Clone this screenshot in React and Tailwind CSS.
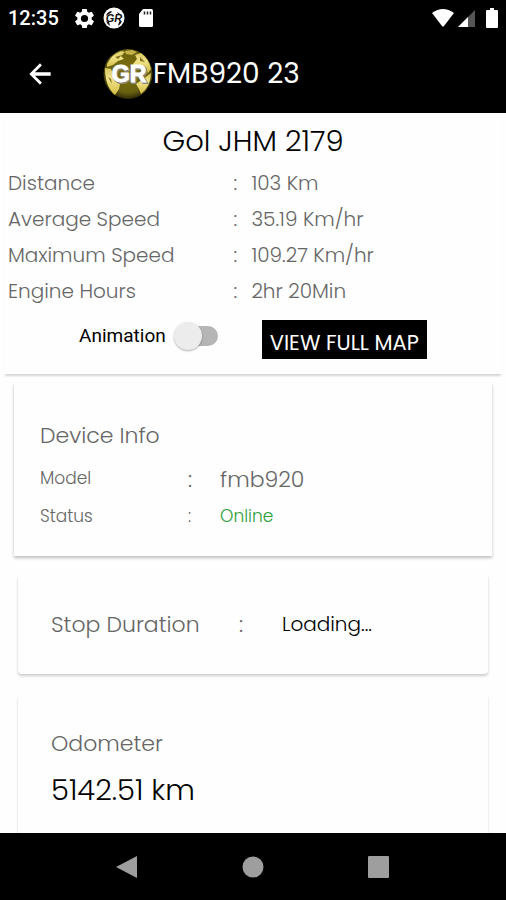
import React, { useState } from 'react';

const stats = [
  { label: 'Distance', value: '103 Km' },
  { label: 'Average Speed', value: '35.19 Km/hr' },
  { label: 'Maximum Speed', value: '109.27 Km/hr' },
  { label: 'Engine Hours', value: '2hr 20Min' },
];

function StatusBar() {
  return (
    <div className="flex h-9 shrink-0 items-center justify-between pl-2 pr-2 text-white">
      <div className="flex items-center">
        <span className="w-[66px] font-[Roboto,sans-serif] text-xl font-medium">12:35</span>
        <svg width="21" height="21" viewBox="1.500 1.500 21 21" fill="currentColor">
          <path d="M19.14 12.94c.04-.3.06-.61.06-.94s-.02-.64-.07-.94l2.03-1.58a.49.49 0 0 0 .12-.61l-1.92-3.32a.49.49 0 0 0-.59-.22l-2.39.96a7 7 0 0 0-1.62-.94l-.36-2.54a.48.48 0 0 0-.48-.41h-3.84a.48.48 0 0 0-.47.41l-.36 2.54a7 7 0 0 0-1.62.94l-2.39-.96a.49.49 0 0 0-.59.22L2.74 8.87a.48.48 0 0 0 .12.61l2.03 1.58a7 7 0 0 0 0 1.88l-2.03 1.58a.49.49 0 0 0-.12.61l1.92 3.32c.12.22.37.29.59.22l2.39-.96c.5.38 1.03.7 1.62.94l.36 2.54c.05.24.24.41.48.41h3.84c.24 0 .44-.17.47-.41l.36-2.54a7 7 0 0 0 1.62-.94l2.39.96c.22.08.47 0 .59-.22l1.92-3.32a.48.48 0 0 0-.12-.61zM12 15.6a3.6 3.6 0 1 1 0-7.2 3.6 3.6 0 0 1 0 7.2z" />
        </svg>
        <svg className="ml-2" width="22" height="22" viewBox="0 0 22 22">
          <circle cx="11" cy="11" r="10.500" fill="#fff" />
          <path d="M3 9q1-4 5-5l1 1-3 2zM14 5q3 1 4 4l-3-2zM3 14l3 1 1 4q-3-2-4-5zM16 15l3-1q-1 3-4 5z" fill="#111" />
          <text x="11" y="15" textAnchor="middle" fontFamily="Liberation Sans, sans-serif" fontWeight="700" fontStyle="italic" fontSize="11" fill="#111">GR</text>
        </svg>
        <svg className="ml-2" width="24" height="24" viewBox="0 0 24 24">
          <path d="M10 3h8.500q1.500 0 1.500 1.500v15q0 1.500-1.500 1.500h-11Q6 21 6 19.500V8z" fill="#fff" />
          <path d="M11.500 5.500v3M14.500 5.500v3M17.500 5.500v3" stroke="#222" strokeWidth="1.500" />
        </svg>
      </div>
      <div className="flex items-center">
        <svg width="22" height="18" viewBox="0 0 22 18" fill="#fff">
          <path d="M0 4Q11-4 22 4L12 17q-1 1-2 0z" />
        </svg>
        <svg className="ml-1" width="18" height="18" viewBox="0 0 18 18">
          <path d="M17 1v17H0z" fill="#555" />
          <path d="M10 8v10H0z" fill="#fff" />
        </svg>
        <svg className="ml-2.5" width="12" height="20" viewBox="0 0 12 20" fill="#fff">
          <path d="M4 0h4v2h3q1 0 1 1v16q0 1-1 1H1q-1 0-1-1V3q0-1 1-1h3z" />
        </svg>
      </div>
    </div>
  );
}

function GlobeLogo() {
  return (
    <svg className="shrink-0" width="50" height="52" viewBox="0 0 50 52">
      <defs>
        <radialGradient id="globe" cx="50%" cy="45%" r="55%">
          <stop offset="0" stopColor="#7d700f" />
          <stop offset="0.75" stopColor="#6b620f" />
          <stop offset="1" stopColor="#2f2b08" />
        </radialGradient>
        <linearGradient id="land" x1="0" y1="0" x2="0" y2="1">
          <stop offset="0" stopColor="#d8c860" />
          <stop offset="0.4" stopColor="#f0e38a" />
          <stop offset="1" stopColor="#d3bd45" />
        </linearGradient>
      </defs>
      <ellipse cx="25" cy="26" rx="24.500" ry="25" fill="url(#globe)" />
      <path d="M4 16Q9 6 18 3l4 1-4 4 3 3-6 2-5 4-6 2z" fill="url(#land)" />
      <path d="M22 3l7-1 5 2-5 3-6-1z" fill="#c4b24a" />
      <path d="M30 16l4-5-2-4 6-2q8 6 10 16l-3 4-5-5-6 2-5-3z" fill="url(#land)" />
      <path d="M2 20l6 1 4 10 5 5-1 5-4 6Q2 39 2 20z" fill="url(#land)" />
      <path d="M33 36l6-4 9-7q0 13-10 21l-2-5z" fill="url(#land)" />
      <path d="M12 9l7-2-4 4zM37 9l5 5-5-1zM5 29l3 2 1 5z" fill="#81731a" />
      <text x="27" y="35" textAnchor="middle" fontFamily="Liberation Sans, sans-serif" fontWeight="700" fontSize="23" fill="#8d8878" stroke="#8d8878" strokeWidth="2">GR</text>
      <text x="26" y="34" textAnchor="middle" fontFamily="Liberation Sans, sans-serif" fontWeight="700" fontSize="23" fill="#fff" stroke="#fff" strokeWidth="1">GR</text>
    </svg>
  );
}

function Header() {
  return (
    <header className="flex h-[77px] shrink-0 items-center pb-0.5 pl-6 text-white">
      <button type="button" aria-label="Back" className="w-[79px]">
        <svg width="32" height="32" viewBox="0 0 24 24" fill="currentColor">
          <path d="M20 10.750H8.200l5.200-5.200L12 4l-8 8 8 8 1.410-1.550L8.200 13.250H20z" />
        </svg>
      </button>
      <GlobeLogo />
      <h1 className="text-[28px]">FMB920 23</h1>
    </header>
  );
}

function NavBar() {
  return (
    <nav className="flex h-[67px] shrink-0 items-center justify-center gap-[104px] bg-black text-[#9e9e9e]">
      <button type="button" aria-label="Back">
        <svg width="22" height="24" viewBox="0 0 22 24" fill="currentColor">
          <path d="M21 1v22L0 12z" />
        </svg>
      </button>
      <button type="button" aria-label="Home">
        <svg width="22" height="22" viewBox="0 0 22 22" fill="currentColor">
          <circle cx="11" cy="11" r="10.500" />
        </svg>
      </button>
      <button type="button" aria-label="Overview">
        <svg width="22" height="22" viewBox="0 0 22 22" fill="currentColor">
          <rect width="21" height="22" rx="1" />
        </svg>
      </button>
    </nav>
  );
}

export default function App() {
  const [animation, setAnimation] = useState(false);

  return (
    <div className="flex h-screen flex-col bg-black font-[Poppins,Inter,sans-serif]">
      <StatusBar />
      <Header />

      <main className="flex-1 overflow-hidden bg-[#fefefe] text-[#666]">
        {/* Trip summary */}
        <section className="mx-1 pb-[15px] shadow-[0_3px_2px_-1px_rgba(0,0,0,0.16)]">
          <h2 className="pt-2.5 text-center text-[29px] leading-9 font-light text-black">Gol JHM 2179</h2>
          <dl className="mt-1.5 px-1 text-xl leading-9 font-light">
            {stats.map((stat) => (
              <div key={stat.label} className="flex">
                <dt className="w-[46%]">{stat.label}</dt>
                <dd className="flex">
                  <span className="w-[18px]">:</span>
                  {stat.value}
                </dd>
              </div>
            ))}
          </dl>
          <div className="mt-[11px] flex items-start justify-center">
            <label className="flex h-8 items-center gap-2 font-[Roboto,sans-serif] text-[19px] text-black">
              Animation
              <input
                type="checkbox"
                role="switch"
                className="peer sr-only"
                checked={animation}
                onChange={(e) => setAnimation(e.target.checked)}
              />
              <span className="flex h-5 w-11 items-center rounded-full bg-linear-to-r from-transparent from-20% to-[#b5b5b5] to-20% peer-checked:justify-end">
                <span className="size-7 rounded-full bg-[#ececec] shadow-[0_1px_2px_rgba(0,0,0,0.3)]"></span>
              </span>
            </label>
            <button type="button" className="ml-11 h-[39px] bg-black px-2 pt-1.5 text-[21px] text-white">
              VIEW FULL MAP
            </button>
          </div>
        </section>

        {/* Device info */}
        <section className="mx-3.5 mt-[9px] h-[173px] px-[26px] pt-[35px] font-light shadow-[0_2px_3px_rgba(0,0,0,0.25)]">
          <h2 className="text-[22px] leading-9">Device Info</h2>
          <dl className="mt-1.5">
            <div className="flex h-[38px] items-center">
              <dt className="w-[148px] text-[17px]">Model</dt>
              <dd className="flex text-[22px]">
                <span className="w-8">:</span>
                fmb920
              </dd>
            </div>
            <div className="flex h-[38px] items-center">
              <dt className="w-[148px] text-[17px]">Status</dt>
              <dd className="flex text-[17px]">
                <span className="w-8">:</span>
                <span className="text-[#2e9e3c]">Online</span>
              </dd>
            </div>
          </dl>
        </section>

        <section className="mx-[18px] mt-[18px] flex h-[100px] items-center rounded-sm px-[33px] text-[22px] font-light shadow-[0_2px_3px_rgba(0,0,0,0.2)]">
          <h2 className="w-[188px]">Stop Duration</h2>
          <span className="w-[43px]">:</span>
          <span className="text-xl text-black">Loading...</span>
        </section>

        <section className="mx-[18px] mt-5 h-[180px] rounded-sm px-[33px] pt-[34px] font-light shadow-[0_2px_3px_rgba(0,0,0,0.15)]">
          <h2 className="text-[22px] leading-8">Odometer</h2>
          <p className="mt-3 text-[29px] leading-9 text-black">5142.51 km</p>
        </section>
      </main>

      <NavBar />
    </div>
  );
}
